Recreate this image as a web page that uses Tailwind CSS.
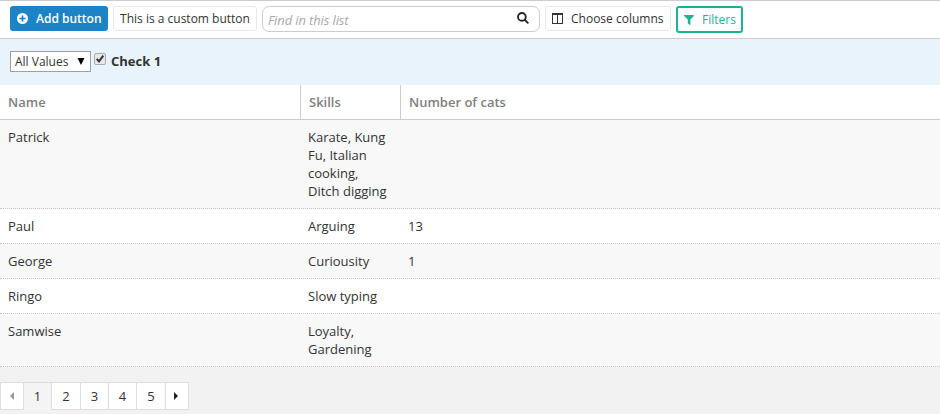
<!DOCTYPE html>
<html lang="en">
<head>
<meta charset="utf-8">
<title>List</title>
<script src="https://cdn.jsdelivr.net/npm/@tailwindcss/browser@4"></script>
</head>
<body class="h-[414px] overflow-hidden bg-[#f2f2f2] font-['Open_Sans',sans-serif] text-[13px] leading-[18px] text-[#333]">
<div class="flex h-[39px] items-start border-y border-[#ccc] bg-white pt-[5px] pl-[10px]">
  <button class="flex h-[25px] w-[98px] items-center rounded-[3px] bg-[#1c84c6] pl-[7px] font-semibold text-white">
    <svg class="mr-[8px] size-[11px]" viewBox="0 0 11 11"><circle cx="5.5" cy="5.5" r="5.5" fill="#fff"/><path d="M5.5 2.4v6.2M2.4 5.5h6.2" stroke="#1c84c6" stroke-width="1.7"/></svg>
    <span class="whitespace-nowrap text-[12px]">Add button</span>
  </button>
  <button class="ml-[5px] h-[25px] w-[144px] rounded-[3px] border border-[#e7eaec] bg-white text-center whitespace-nowrap text-[12px]">This is a custom button</button>
  <div class="ml-[5px] flex h-[26px] w-[278px] items-center justify-between rounded-[7px] border border-[#ccc] pr-[10px] pl-[5px]">
    <span class="pt-[1px] text-[13px] tracking-[-0.12px] text-[#a9a9a9] italic">Find in this list</span>
    <svg class="-mt-[2px] size-[12px]" viewBox="0 0 13 13" fill="none" stroke="#222" stroke-width="2"><circle cx="5.3" cy="5.3" r="4.2"/><path d="M8.4 8.4l3.3 3.3" stroke-linecap="round"/></svg>
  </div>
  <button class="ml-[5px] flex h-[25px] w-[126px] items-center rounded-[3px] border border-[#e7eaec] pl-[6px]">
    <svg class="mr-[8px] h-[11px] w-[11px]" viewBox="0 0 11 11" fill="none" stroke="#333" shape-rendering="crispEdges"><path d="M.5.5h10v10H.5zM0 1.5h11M5.5 1v10"/></svg>
    <span class="whitespace-nowrap text-[12px]">Choose columns</span>
  </button>
  <button class="ml-[5px] flex h-[27px] w-[67px] items-center rounded-[3px] border-2 border-[#1ab394] pl-[6px] text-[#1ab394]">
    <svg class="mr-[8px] h-[10px] w-[10px]" viewBox="0 0 10 10" fill="#1ab394"><path d="M.3 0h9.4q.5.4.1.9L6.4 4.5V9.5q-.3.6-.8.3L3.8 8.2V4.5L.2.9Q-.2.4.3 0z"/></svg>
    <span class="text-[12px]">Filters</span>
  </button>
</div>
<div class="flex h-[46px] items-start bg-[#e8f3fc] pt-[12px] pl-[10px]">
  <div class="flex h-[21px] w-[81px] items-center justify-between border border-[#a0a0a0] bg-white pr-[5px] pl-[4px]">
    <span class="whitespace-nowrap text-[12px]">All Values</span>
    <svg class="-mt-[1px] h-[7px] w-[8px]" viewBox="0 0 8 7"><path d="M.5 0h7L4 7z"/></svg>
  </div>
  <svg class="mt-[2px] ml-[3px] size-[12px]" viewBox="0 0 12 12"><rect x=".5" y=".5" width="11" height="11" rx="1.5" fill="#e8e8e8" stroke="#aaa"/><path d="M2.7 5.9l2.3 2.5 4.3-5.8" fill="none" stroke="#333" stroke-width="2"/></svg>
  <span class="mt-[1px] ml-[5px] font-bold">Check 1</span>
</div>
<div class="grid h-[35px] grid-cols-[300px_100px_1fr] border-b border-[#ccc] bg-white font-semibold text-[#808080]">
  <div class="px-[8px] pt-[8px]">Name</div>
  <div class="border-l border-[#ccc] px-[8px] pt-[8px]">Skills</div>
  <div class="border-l border-[#ccc] px-[8px] pt-[8px]">Number of cats</div>
</div>
<div class="grid h-[89px] grid-cols-[300px_100px_1fr] border-b border-dotted border-[#c4c4c4] bg-[#f8f8f8]">
  <div class="p-[8px]">Patrick</div><div class="p-[8px] whitespace-nowrap">Karate, Kung<br>Fu, Italian<br>cooking,<br>Ditch digging</div><div class="p-[8px]"></div>
</div>
<div class="grid h-[35px] grid-cols-[300px_100px_1fr] border-b border-dotted border-[#c4c4c4] bg-white">
  <div class="p-[8px]">Paul</div><div class="p-[8px]">Arguing</div><div class="p-[8px]">13</div>
</div>
<div class="grid h-[35px] grid-cols-[300px_100px_1fr] border-b border-dotted border-[#c4c4c4] bg-[#f8f8f8]">
  <div class="p-[8px]">George</div><div class="p-[8px]">Curiousity</div><div class="p-[8px]">1</div>
</div>
<div class="grid h-[35px] grid-cols-[300px_100px_1fr] border-b border-dotted border-[#c4c4c4] bg-white">
  <div class="p-[8px]">Ringo</div><div class="p-[8px]">Slow typing</div><div class="p-[8px]"></div>
</div>
<div class="grid h-[53px] grid-cols-[300px_100px_1fr] border-b border-dotted border-[#c4c4c4] bg-[#f8f8f8]">
  <div class="p-[8px]">Samwise</div><div class="p-[8px]">Loyalty,<br>Gardening</div><div class="p-[8px]"></div>
</div>
<div class="mt-[15px] grid h-[28px] w-[189px] grid-cols-[23px_28px_29px_28px_28px_29px_24px] border-y border-[#ddd] bg-white text-center leading-[27px]">
  <div class="flex items-center justify-center border-l border-[#ddd]"><svg class="-mt-[2px] mr-[1px] h-[8px] w-[4px]" viewBox="0 0 4 8"><path d="M4 0v8L0 4z" fill="#999"/></svg></div>
  <div class="border-l border-[#ddd] bg-[#f4f4f4]">1</div>
  <div class="border-l border-[#ddd]">2</div>
  <div class="border-l border-[#ddd]">3</div>
  <div class="border-l border-[#ddd]">4</div>
  <div class="border-l border-[#ddd]">5</div>
  <div class="flex items-center justify-center border-x border-[#ddd]"><svg class="-mt-[2px] mr-[2px] h-[8px] w-[4px]" viewBox="0 0 4 8"><path d="M0 0v8l4-4z" fill="#222"/></svg></div>
</div>
</body>
</html>
